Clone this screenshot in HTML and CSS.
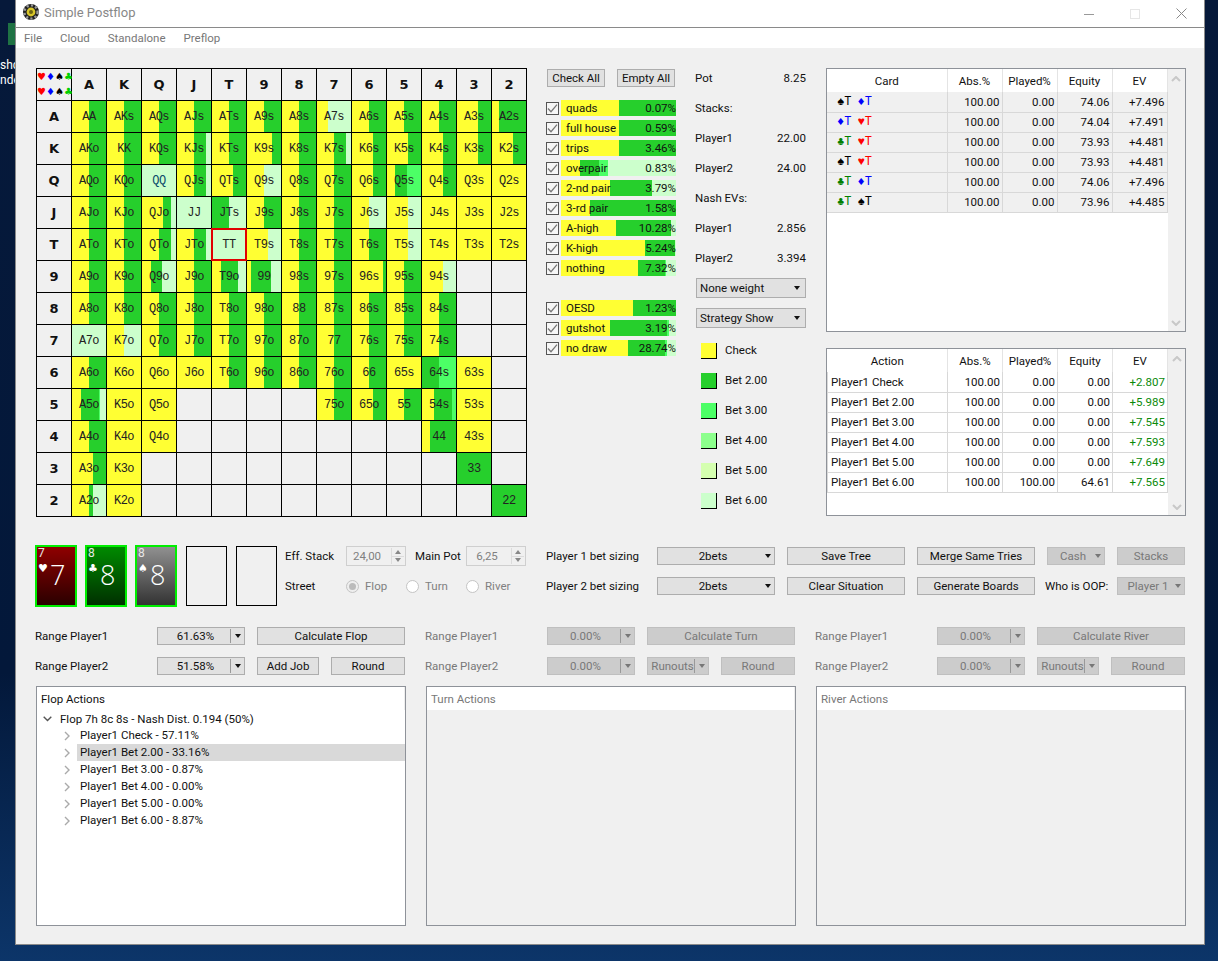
FILE: index.html
```html
<!DOCTYPE html>
<html lang="en">
<head>
    <meta charset="UTF-8">
    <meta name="viewport" content="width=device-width, initial-scale=1.0">
    <title>Simple Postflop</title>
    <link rel="stylesheet" href="styles.css">
</head>
<body>

<!-- bits of the desktop showing behind the window -->
<div class="desktop-icon">
    <div class="excel-icon"></div>
    <p>shc</p>
    <p>nde</p>
</div>

<div class="window">
    <div class="titlebar">
        <svg class="logo" width="16" height="16" viewBox="0 0 16 16">
            <circle cx="8" cy="8" r="8" fill="#222"/>
            <circle cx="8" cy="8" r="6.6" fill="none" stroke="#999" stroke-width="2.4" stroke-dasharray="2.2 2.2"/>
            <circle cx="8" cy="8" r="4.4" fill="#d8c62a"/>
            <circle cx="8" cy="8" r="2" fill="#6d6512"/>
        </svg>
        <span class="title">Simple Postflop</span>
        <div class="window-buttons">
            <div class="window-btn"><svg width="10" height="10" viewBox="0 0 10 10"><path d="M0 5.5h10" stroke="#999"/></svg></div>
            <div class="window-btn"><svg width="10" height="10" viewBox="0 0 10 10"><rect x=".5" y=".5" width="9" height="9" fill="none" stroke="#e6e6e6"/></svg></div>
            <div class="window-btn"><svg width="11" height="11" viewBox="0 0 11 11"><path d="M.5.5l10 10M10.5.5l-10 10" stroke="#888"/></svg></div>
        </div>
    </div>
    <div class="menubar">
        <span>File</span>
        <span>Cloud</span>
        <span>Standalone</span>
        <span>Preflop</span>
    </div>

    <div class="content">
        <div class="main-row">
            <!-- hand matrix -->
            <div class="matrix">
                <div class="corner">
                    <span class="heart">♥</span><span class="diamond">♦</span><span class="spade">♠</span><span class="club">♣</span>
                    <span class="heart">♥</span><span class="diamond">♦</span><span class="spade">♠</span><span class="club">♣</span>
                </div>
                <div class="head">A</div><div class="head">K</div><div class="head">Q</div><div class="head">J</div><div class="head">T</div><div class="head">9</div><div class="head">8</div><div class="head">7</div><div class="head">6</div><div class="head">5</div><div class="head">4</div><div class="head">3</div><div class="head">2</div>

                <div class="head">A</div>
                <div class="cell">AA</div><div class="cell">AKs</div><div class="cell">AQs</div><div class="cell">AJs</div><div class="cell">ATs</div><div class="cell">A9s</div><div class="cell">A8s</div>
                <div class="cell" style="--y:33%;--g:33%">A7s</div><div class="cell">A6s</div><div class="cell">A5s</div><div class="cell">A4s</div><div class="cell" style="--y:62%">A3s</div><div class="cell" style="--y:22%">A2s</div>

                <div class="head">K</div>
                <div class="cell">AKo</div><div class="cell">KK</div><div class="cell">KQs</div><div class="cell" style="--g:86%">KJs</div><div class="cell">KTs</div><div class="cell" style="--y:73%">K9s</div><div class="cell">K8s</div>
                <div class="cell" style="--g:85%">K7s</div><div class="cell" style="--y:62%">K6s</div><div class="cell" style="--y:62%">K5s</div><div class="cell" style="--y:62%">K4s</div><div class="cell" style="--y:62%">K3s</div><div class="cell" style="--y:62%">K2s</div>

                <div class="head">Q</div>
                <div class="cell">AQo</div><div class="cell">KQo</div><div class="cell pale blue">QQ</div><div class="cell" style="--g:86%">QJs</div><div class="cell" style="--y:62%">QTs</div><div class="cell" style="--g:50%">Q9s</div><div class="cell">Q8s</div>
                <div class="cell">Q7s</div><div class="cell" style="--y:62%">Q6s</div><div class="cell" style="--y:23%;--g:60%;--b:100%">Q5s</div><div class="cell" style="--y:62%">Q4s</div><div class="cell yellow">Q3s</div><div class="cell yellow">Q2s</div>

                <div class="head">J</div>
                <div class="cell">AJo</div><div class="cell">KJo</div><div class="cell" style="--y:62%;--g:85%">QJo</div><div class="cell pale">JJ</div><div class="cell" style="--y:0%;--g:50%">JTs</div><div class="cell">J9s</div><div class="cell">J8s</div>
                <div class="cell">J7s</div><div class="cell" style="--g:50%">J6s</div><div class="cell" style="--y:62%;--g:62%">J5s</div><div class="cell yellow">J4s</div><div class="cell yellow">J3s</div><div class="cell yellow">J2s</div>

                <div class="head">T</div>
                <div class="cell">ATo</div><div class="cell">KTo</div><div class="cell" style="--g:85%">QTo</div><div class="cell" style="--g:85%">JTo</div><div class="cell pale selected">TT</div><div class="cell" style="--y:62%;--g:62%">T9s</div><div class="cell">T8s</div>
                <div class="cell">T7s</div><div class="cell">T6s</div><div class="cell" style="--y:62%;--g:62%">T5s</div><div class="cell yellow">T4s</div><div class="cell yellow">T3s</div><div class="cell yellow">T2s</div>

                <div class="head">9</div>
                <div class="cell">A9o</div><div class="cell">K9o</div><div class="cell" style="--y:25%;--g:60%">Q9o</div><div class="cell">J9o</div><div class="cell" style="--y:25%;--g:75%">T9o</div><div class="cell" style="--y:12%;--g:70%">99</div><div class="cell">98s</div>
                <div class="cell">97s</div><div class="cell" style="--y:92%">96s</div><div class="cell">95s</div><div class="cell" style="--y:62%;--g:62%">94s</div><div class="cell empty"></div><div class="cell empty"></div>

                <div class="head">8</div>
                <div class="cell">A8o</div><div class="cell">K8o</div><div class="cell">Q8o</div><div class="cell">J8o</div><div class="cell">T8o</div><div class="cell">98o</div><div class="cell">88</div>
                <div class="cell">87s</div><div class="cell">86s</div><div class="cell">85s</div><div class="cell">84s</div><div class="cell empty"></div><div class="cell empty"></div>

                <div class="head">7</div>
                <div class="cell pale">A7o</div><div class="cell" style="--g:50%">K7o</div><div class="cell">Q7o</div><div class="cell">J7o</div><div class="cell">T7o</div><div class="cell">97o</div><div class="cell">87o</div>
                <div class="cell">77</div><div class="cell">76s</div><div class="cell">75s</div><div class="cell">74s</div><div class="cell empty"></div><div class="cell empty"></div>

                <div class="head">6</div>
                <div class="cell">A6o</div><div class="cell yellow">K6o</div><div class="cell yellow">Q6o</div><div class="cell yellow">J6o</div><div class="cell">T6o</div><div class="cell">96o</div><div class="cell">86o</div>
                <div class="cell">76o</div><div class="cell">66</div><div class="cell yellow">65s</div><div class="cell" style="--y:0%;--g:50%;--b:100%">64s</div><div class="cell yellow">63s</div><div class="cell empty"></div>

                <div class="head">5</div>
                <div class="cell" style="--y:27%;--g:80%;--b:82%">A5o</div><div class="cell yellow">K5o</div><div class="cell yellow">Q5o</div><div class="cell empty"></div><div class="cell empty"></div><div class="cell empty"></div><div class="cell empty"></div>
                <div class="cell">75o</div><div class="cell" style="--y:62%">65o</div><div class="cell">55</div><div class="cell" style="--y:35%;--g:88%;--b:100%">54s</div><div class="cell yellow">53s</div><div class="cell empty"></div>

                <div class="head">4</div>
                <div class="cell">A4o</div><div class="cell yellow">K4o</div><div class="cell yellow">Q4o</div><div class="cell empty"></div><div class="cell empty"></div><div class="cell empty"></div><div class="cell empty"></div>
                <div class="cell empty"></div><div class="cell empty"></div><div class="cell empty"></div><div class="cell" style="--y:24%">44</div><div class="cell yellow">43s</div><div class="cell empty"></div>

                <div class="head">3</div>
                <div class="cell" style="--y:62%">A3o</div><div class="cell yellow">K3o</div><div class="cell empty"></div><div class="cell empty"></div><div class="cell empty"></div><div class="cell empty"></div><div class="cell empty"></div>
                <div class="cell empty"></div><div class="cell empty"></div><div class="cell empty"></div><div class="cell empty"></div><div class="cell" style="--y:0%">33</div><div class="cell empty"></div>

                <div class="head">2</div>
                <div class="cell" style="--y:50%;--g:62%">A2o</div><div class="cell yellow">K2o</div><div class="cell empty"></div><div class="cell empty"></div><div class="cell empty"></div><div class="cell empty"></div><div class="cell empty"></div>
                <div class="cell empty"></div><div class="cell empty"></div><div class="cell empty"></div><div class="cell empty"></div><div class="cell empty"></div><div class="cell" style="--y:0%">22</div>
            </div>

            <!-- hand category filters -->
            <div class="filters">
                <div class="filter-buttons">
                    <button class="btn">Check All</button>
                    <button class="btn">Empty All</button>
                </div>
                <div class="filter-group">
                    <div class="filter"><span class="check"><svg width="11" height="11" viewBox="0 0 11 11"><path d="M1 5.5l3 3.2 6-7" fill="none" stroke="#777" stroke-width="1.3"/></svg></span><div class="bar" style="--y:50%"><span>quads</span><span>0.07%</span></div></div>
                    <div class="filter"><span class="check"><svg width="11" height="11" viewBox="0 0 11 11"><path d="M1 5.5l3 3.2 6-7" fill="none" stroke="#777" stroke-width="1.3"/></svg></span><div class="bar" style="--y:50%"><span>full house</span><span>0.59%</span></div></div>
                    <div class="filter"><span class="check"><svg width="11" height="11" viewBox="0 0 11 11"><path d="M1 5.5l3 3.2 6-7" fill="none" stroke="#777" stroke-width="1.3"/></svg></span><div class="bar" style="--y:50%"><span>trips</span><span>3.46%</span></div></div>
                    <div class="filter"><span class="check"><svg width="11" height="11" viewBox="0 0 11 11"><path d="M1 5.5l3 3.2 6-7" fill="none" stroke="#777" stroke-width="1.3"/></svg></span><div class="bar" style="--y:16.5%;--g:33%;--b:41%"><span>overpair</span><span>0.83%</span></div></div>
                    <div class="filter"><span class="check"><svg width="11" height="11" viewBox="0 0 11 11"><path d="M1 5.5l3 3.2 6-7" fill="none" stroke="#777" stroke-width="1.3"/></svg></span><div class="bar" style="--y:43%;--g:79%"><span>2-nd pair</span><span>3.79%</span></div></div>
                    <div class="filter"><span class="check"><svg width="11" height="11" viewBox="0 0 11 11"><path d="M1 5.5l3 3.2 6-7" fill="none" stroke="#777" stroke-width="1.3"/></svg></span><div class="bar" style="--y:25%"><span>3-rd pair</span><span>1.58%</span></div></div>
                    <div class="filter"><span class="check"><svg width="11" height="11" viewBox="0 0 11 11"><path d="M1 5.5l3 3.2 6-7" fill="none" stroke="#777" stroke-width="1.3"/></svg></span><div class="bar" style="--y:48%;--g:96%"><span>A-high</span><span>10.28%</span></div></div>
                    <div class="filter"><span class="check"><svg width="11" height="11" viewBox="0 0 11 11"><path d="M1 5.5l3 3.2 6-7" fill="none" stroke="#777" stroke-width="1.3"/></svg></span><div class="bar" style="--y:73%;--g:99%"><span>K-high</span><span>5.24%</span></div></div>
                    <div class="filter"><span class="check"><svg width="11" height="11" viewBox="0 0 11 11"><path d="M1 5.5l3 3.2 6-7" fill="none" stroke="#777" stroke-width="1.3"/></svg></span><div class="bar" style="--y:67%;--g:90%;--b:91%"><span>nothing</span><span>7.32%</span></div></div>
                </div>
                <div class="filter-group">
                    <div class="filter"><span class="check"><svg width="11" height="11" viewBox="0 0 11 11"><path d="M1 5.5l3 3.2 6-7" fill="none" stroke="#777" stroke-width="1.3"/></svg></span><div class="bar" style="--y:63%"><span>OESD</span><span>1.23%</span></div></div>
                    <div class="filter"><span class="check"><svg width="11" height="11" viewBox="0 0 11 11"><path d="M1 5.5l3 3.2 6-7" fill="none" stroke="#777" stroke-width="1.3"/></svg></span><div class="bar" style="--y:43%;--g:92%;--b:94%"><span>gutshot</span><span>3.19%</span></div></div>
                    <div class="filter"><span class="check"><svg width="11" height="11" viewBox="0 0 11 11"><path d="M1 5.5l3 3.2 6-7" fill="none" stroke="#777" stroke-width="1.3"/></svg></span><div class="bar" style="--y:58%;--g:90%;--b:92%"><span>no draw</span><span>28.74%</span></div></div>
                </div>
            </div>

            <!-- pot and stacks -->
            <div class="info">
                <div class="info-row"><span>Pot</span><span>8.25</span></div>
                <div class="info-row"><span>Stacks:</span></div>
                <div class="info-row"><span>Player1</span><span>22.00</span></div>
                <div class="info-row"><span>Player2</span><span>24.00</span></div>
                <div class="info-row"><span>Nash EVs:</span></div>
                <div class="info-row"><span>Player1</span><span>2.856</span></div>
                <div class="info-row"><span>Player2</span><span>3.394</span></div>
                <div class="combo info-combo"><span>None weight</span><i class="arrow"></i></div>
                <div class="combo info-combo"><span>Strategy Show</span><i class="arrow"></i></div>
                <div class="legend">
                    <div class="legend-row"><i class="swatch sw-check"></i>Check</div>
                    <div class="legend-row"><i class="swatch sw-bet2"></i>Bet 2.00</div>
                    <div class="legend-row"><i class="swatch sw-bet3"></i>Bet 3.00</div>
                    <div class="legend-row"><i class="swatch sw-bet4"></i>Bet 4.00</div>
                    <div class="legend-row"><i class="swatch sw-bet5"></i>Bet 5.00</div>
                    <div class="legend-row"><i class="swatch sw-bet6"></i>Bet 6.00</div>
                </div>
            </div>

            <!-- result tables -->
            <div class="tables">
                <div class="table-box cards-box">
                    <table class="grey-rows">
                        <thead>
                            <tr><th class="first">Card</th><th>Abs.%</th><th>Played%</th><th>Equity</th><th>EV</th></tr>
                        </thead>
                        <tbody>
                            <tr><td class="combo-cards"><b class="spade">♠T</b> <b class="diamond">♦T</b></td><td>100.00</td><td>0.00</td><td>74.06</td><td>+7.496</td></tr>
                            <tr><td class="combo-cards"><b class="diamond">♦T</b> <b class="heart">♥T</b></td><td>100.00</td><td>0.00</td><td>74.04</td><td>+7.491</td></tr>
                            <tr><td class="combo-cards"><b class="club">♣T</b> <b class="heart">♥T</b></td><td>100.00</td><td>0.00</td><td>73.93</td><td>+4.481</td></tr>
                            <tr><td class="combo-cards"><b class="spade">♠T</b> <b class="heart">♥T</b></td><td>100.00</td><td>0.00</td><td>73.93</td><td>+4.481</td></tr>
                            <tr><td class="combo-cards"><b class="club">♣T</b> <b class="diamond">♦T</b></td><td>100.00</td><td>0.00</td><td>74.06</td><td>+7.496</td></tr>
                            <tr><td class="combo-cards"><b class="club">♣T</b> <b class="spade">♠T</b></td><td>100.00</td><td>0.00</td><td>73.96</td><td>+4.485</td></tr>
                        </tbody>
                    </table>
                    <div class="scrollbar">
                        <svg width="10" height="6" viewBox="0 0 10 6"><path d="M1 5l4-4 4 4" fill="none" stroke="#c8c8c8" stroke-width="2"/></svg>
                        <svg width="10" height="6" viewBox="0 0 10 6"><path d="M1 1l4 4 4-4" fill="none" stroke="#c8c8c8" stroke-width="2"/></svg>
                    </div>
                </div>
                <div class="table-box actions-box">
                    <table class="green-ev">
                        <thead>
                            <tr><th class="first">Action</th><th>Abs.%</th><th>Played%</th><th>Equity</th><th>EV</th></tr>
                        </thead>
                        <tbody>
                            <tr><td class="action-name">Player1 Check</td><td>100.00</td><td>0.00</td><td>0.00</td><td>+2.807</td></tr>
                            <tr><td class="action-name">Player1 Bet 2.00</td><td>100.00</td><td>0.00</td><td>0.00</td><td>+5.989</td></tr>
                            <tr><td class="action-name">Player1 Bet 3.00</td><td>100.00</td><td>0.00</td><td>0.00</td><td>+7.545</td></tr>
                            <tr><td class="action-name">Player1 Bet 4.00</td><td>100.00</td><td>0.00</td><td>0.00</td><td>+7.593</td></tr>
                            <tr><td class="action-name">Player1 Bet 5.00</td><td>100.00</td><td>0.00</td><td>0.00</td><td>+7.649</td></tr>
                            <tr><td class="action-name">Player1 Bet 6.00</td><td>100.00</td><td>100.00</td><td>64.61</td><td>+7.565</td></tr>
                        </tbody>
                    </table>
                    <div class="scrollbar">
                        <svg width="10" height="6" viewBox="0 0 10 6"><path d="M1 5l4-4 4 4" fill="none" stroke="#c8c8c8" stroke-width="2"/></svg>
                        <svg width="10" height="6" viewBox="0 0 10 6"><path d="M1 1l4 4 4-4" fill="none" stroke="#c8c8c8" stroke-width="2"/></svg>
                    </div>
                </div>
            </div>
        </div>

        <!-- board cards and tree settings -->
        <div class="setup-row">
            <div class="board">
                <div class="card card-red"><span class="card-rank">7</span><div class="card-face"><span class="card-suit">♥</span><span class="card-big">7</span></div></div>
                <div class="card card-green"><span class="card-rank">8</span><div class="card-face"><span class="card-suit">♣</span><span class="card-big">8</span></div></div>
                <div class="card card-grey"><span class="card-rank">8</span><div class="card-face"><span class="card-suit">♠</span><span class="card-big">8</span></div></div>
                <div class="card card-empty"></div>
                <div class="card card-empty"></div>
            </div>
            <div class="street-form">
                <span>Eff. Stack</span>
                <div class="spin"><span>24,00</span><div class="spin-arrows"><i class="up"></i><i class="down"></i></div></div>
                <span class="pot-label">Main Pot</span>
                <div class="spin"><span>6,25</span><div class="spin-arrows"><i class="up"></i><i class="down"></i></div></div>
                <span>Street</span>
                <div class="radios">
                    <label class="radio on"><i></i>Flop</label>
                    <label class="radio"><i></i>Turn</label>
                    <label class="radio"><i></i>River</label>
                </div>
            </div>
            <div class="sizing">
                <span>Player 1 bet sizing</span>
                <div class="combo"><span class="grow">2bets</span><i class="arrow"></i></div>
                <button class="btn">Save Tree</button>
                <button class="btn">Merge Same Tries</button>
                <div class="combo off"><span class="grow">Cash</span><i class="arrow"></i></div>
                <button class="btn off">Stacks</button>
                <span>Player 2 bet sizing</span>
                <div class="combo"><span class="grow">2bets</span><i class="arrow"></i></div>
                <button class="btn">Clear Situation</button>
                <button class="btn">Generate Boards</button>
                <span class="oop-label">Who is OOP:</span>
                <div class="combo off"><span class="grow">Player 1</span><i class="arrow"></i></div>
            </div>
        </div>

        <!-- flop, turn, river -->
        <div class="streets">
            <div class="street">
                <div class="range-form">
                    <span class="range-label">Range Player1</span>
                    <div class="combo split"><span class="grow">61.63%</span><i class="divider"></i><i class="arrow"></i></div>
                    <button class="btn wide">Calculate Flop</button>
                    <span class="range-label">Range Player2</span>
                    <div class="combo split"><span class="grow">51.58%</span><i class="divider"></i><i class="arrow"></i></div>
                    <button class="btn">Add Job</button>
                    <button class="btn">Round</button>
                </div>
                <div class="tree">
                    <div class="tree-head">Flop Actions</div>
                    <div class="tree-row root"><svg width="9" height="6" viewBox="0 0 9 6"><path d="M.7.7l3.8 3.8L8.3.7" fill="none" stroke="#555" stroke-width="1.4"/></svg><span>Flop 7h 8c 8s - Nash Dist. 0.194 (50%)</span></div>
                    <div class="tree-row child"><svg width="7" height="10" viewBox="0 0 7 10"><path d="M1 1l4 4-4 4" fill="none" stroke="#aaa" stroke-width="1.4"/></svg><span>Player1 Check - 57.11%</span></div>
                    <div class="tree-row child picked"><svg width="7" height="10" viewBox="0 0 7 10"><path d="M1 1l4 4-4 4" fill="none" stroke="#aaa" stroke-width="1.4"/></svg><span>Player1 Bet 2.00 - 33.16%</span></div>
                    <div class="tree-row child"><svg width="7" height="10" viewBox="0 0 7 10"><path d="M1 1l4 4-4 4" fill="none" stroke="#aaa" stroke-width="1.4"/></svg><span>Player1 Bet 3.00 - 0.87%</span></div>
                    <div class="tree-row child"><svg width="7" height="10" viewBox="0 0 7 10"><path d="M1 1l4 4-4 4" fill="none" stroke="#aaa" stroke-width="1.4"/></svg><span>Player1 Bet 4.00 - 0.00%</span></div>
                    <div class="tree-row child"><svg width="7" height="10" viewBox="0 0 7 10"><path d="M1 1l4 4-4 4" fill="none" stroke="#aaa" stroke-width="1.4"/></svg><span>Player1 Bet 5.00 - 0.00%</span></div>
                    <div class="tree-row child"><svg width="7" height="10" viewBox="0 0 7 10"><path d="M1 1l4 4-4 4" fill="none" stroke="#aaa" stroke-width="1.4"/></svg><span>Player1 Bet 6.00 - 8.87%</span></div>
                </div>
            </div>

            <div class="street disabled">
                <div class="range-form">
                    <span class="range-label">Range Player1</span>
                    <div class="combo split off"><span class="grow">0.00%</span><i class="divider"></i><i class="arrow"></i></div>
                    <button class="btn off wide">Calculate Turn</button>
                    <span class="range-label">Range Player2</span>
                    <div class="combo split off"><span class="grow">0.00%</span><i class="divider"></i><i class="arrow"></i></div>
                    <div class="combo split off"><span class="grow">Runouts</span><i class="divider"></i><i class="arrow"></i></div>
                    <button class="btn off">Round</button>
                </div>
                <div class="tree">
                    <div class="tree-head">Turn Actions</div>
                </div>
            </div>

            <div class="street disabled">
                <div class="range-form">
                    <span class="range-label">Range Player1</span>
                    <div class="combo split off"><span class="grow">0.00%</span><i class="divider"></i><i class="arrow"></i></div>
                    <button class="btn off wide">Calculate River</button>
                    <span class="range-label">Range Player2</span>
                    <div class="combo split off"><span class="grow">0.00%</span><i class="divider"></i><i class="arrow"></i></div>
                    <div class="combo split off"><span class="grow">Runouts</span><i class="divider"></i><i class="arrow"></i></div>
                    <button class="btn off">Round</button>
                </div>
                <div class="tree">
                    <div class="tree-head">River Actions</div>
                </div>
            </div>
        </div>
    </div>
</div>

</body>
</html>
```

FILE: styles.css
```css
* {
    box-sizing: border-box;
}

html, body {
    height: 961px;
    margin: 0;
    overflow: hidden;
}

body {
    font-family: Roboto, "Noto Sans", sans-serif;
    font-size: 11.5px;
    color: #111;
    background: linear-gradient(180deg, #06193a 0%, #03183a 70%, #0c3569 100%);
}

/* Desktop behind the window */
.desktop-icon {
    position: absolute;
    left: 0;
    top: 23px;
    width: 15px;
    overflow: hidden;
    color: #fff;
    font-size: 12px;
}

.desktop-icon p {
    margin: 0;
    height: 15px;
    line-height: 15px;
}

.excel-icon {
    width: 7px;
    height: 22px;
    margin: 0 0 13px 8px;
    background: #1f7244;
}

.window {
    position: relative;
    width: 1190px;
    height: 945px;
    margin-left: 15px;
    background: #f0f0f0;
    border: 1px solid #8a8a8a;
    border-top: none;
}

/* Title bar and menu */
.titlebar {
    display: flex;
    align-items: center;
    height: 28px;
    padding-left: 7px;
    background: #fff;
    border-bottom: 1px solid #8a8a8a;
}

.logo {
    margin-bottom: 3px;
}

.title {
    margin: 0 0 3px 5px;
    font-size: 13px;
    color: #888;
}

.window-buttons {
    display: flex;
    margin-left: auto;
}

.window-btn {
    display: flex;
    justify-content: center;
    align-items: center;
    width: 46px;
    height: 22px;
}

.menubar {
    display: flex;
    gap: 18px;
    height: 20px;
    padding-left: 8px;
    align-items: center;
    background: #fff;
    color: #777;
}

.content {
    padding: 20px 0 0 20px;
}

.main-row {
    display: grid;
    grid-template-columns: 491px 130px 112px 360px;
    column-gap: 19px;
    height: 448px;
}

/* Hand matrix */
.matrix {
    display: grid;
    grid-template-columns: repeat(14, 34px);
    grid-auto-rows: 31px;
    gap: 1px;
    width: 491px;
    height: 449px;
    padding: 1px;
    background: #000;
}

.corner {
    display: grid;
    grid-template-columns: repeat(4, 1fr);
    align-items: center;
    justify-items: center;
    padding: 0 2px 0 0;
    background: #f0f0f0;
    font-family: "DejaVu Sans", sans-serif;
    font-size: 10px;
    line-height: 12px;
}

.heart { color: #f00; }
.diamond { color: #00f; }
.spade { color: #000; }
.club { color: #008000; }

.corner .club {
    color: #00d000;
}

.head {
    display: flex;
    justify-content: center;
    align-items: center;
    background: #f0f0f0;
    font-family: "DejaVu Sans", sans-serif;
    font-weight: bold;
    font-size: 13px;
}

.cell {
    --y: 50%;
    --g: 100%;
    --b: var(--g);
    display: flex;
    justify-content: center;
    align-items: center;
    font-family: "Liberation Mono", monospace;
    font-size: 12px;
    letter-spacing: -0.5px;
    color: #222;
    background: linear-gradient(90deg,
        #ffff33 var(--y),
        #26cf2c var(--y) var(--g),
        #4cff66 var(--g) var(--b),
        #ccffcc var(--b));
}

.cell.yellow { --y: 100%; }
.cell.pale { --y: 0%; --g: 0%; }
.cell.blue { color: #0a4a6a; }

.cell.empty {
    background: #f0f0f0;
}

.cell.selected {
    outline: 2px solid #e00000;
    outline-offset: -1px;
}

/* Filters */
.filters {
    padding-top: 1px;
}

.filter-buttons {
    display: flex;
    justify-content: space-between;
    padding: 0 1px;
    margin-bottom: 13px;
}

.btn {
    height: 18px;
    padding: 0;
    font: inherit;
    color: #111;
    background: #e1e1e1;
    border: 1px solid #adadad;
}

.btn.off {
    color: #787878;
    background: #cccccc;
    border-color: #bfbfbf;
}

.filter-buttons .btn {
    width: 58px;
}

.filter-group {
    display: flex;
    flex-direction: column;
    gap: 4px;
    margin-bottom: 24px;
}

.filter {
    display: flex;
    align-items: center;
    height: 16px;
}

.check {
    display: flex;
    justify-content: center;
    align-items: center;
    flex: none;
    width: 13px;
    height: 13px;
    margin-right: 2px;
    background: #f6f6f6;
    border: 1px solid #555;
}

.bar {
    --y: 50%;
    --g: 100%;
    --b: var(--g);
    display: flex;
    justify-content: space-between;
    align-items: center;
    flex: 1;
    height: 16px;
    padding-left: 5px;
    background: linear-gradient(90deg,
        #ffff33 var(--y),
        #26cf2c var(--y) var(--g),
        #4cff66 var(--g) var(--b),
        #ccffcc var(--b));
}

/* Pot, stacks, legend */
.info {
    padding-right: 1px;
}

.info-row {
    display: flex;
    justify-content: space-between;
    align-items: center;
    height: 20px;
    margin-bottom: 10px;
}

.combo {
    display: flex;
    align-items: center;
    height: 18px;
    padding: 0 5px 0 3px;
    background: #e1e1e1;
    border: 1px solid #adadad;
}

.combo .grow {
    flex: 1;
    text-align: center;
}

.combo.off {
    color: #787878;
    background: #cccccc;
    border-color: #bfbfbf;
}

.info-combo {
    justify-content: space-between;
    height: 20px;
    margin: 0 0 10px 1px;
    width: 110px;
}

.arrow {
    flex: none;
    width: 0;
    height: 0;
    border-left: 3.5px solid transparent;
    border-right: 3.5px solid transparent;
    border-top: 4px solid #111;
}

.off .arrow {
    border-top-color: #777;
}

.divider {
    flex: none;
    width: 1px;
    height: 14px;
    margin: 0 4px 0 0;
    background: #999;
}

.split {
    padding-right: 3px;
}

.legend {
    display: flex;
    flex-direction: column;
    gap: 10px;
    margin-top: 12px;
}

.legend-row {
    display: flex;
    align-items: center;
    height: 20px;
    padding-left: 6px;
}

.swatch {
    width: 16px;
    height: 16px;
    margin: 2px 8px 0 0;
    border-right: 1px solid #000;
    border-bottom: 1px solid #000;
}

.sw-check { background: #ffff33; }
.sw-bet2 { background: #26cf2c; }
.sw-bet3 { background: #4cff66; }
.sw-bet4 { background: #8cff8c; }
.sw-bet5 { background: #d5ffb0; }
.sw-bet6 { background: #ccffcc; }

/* Result tables */
.tables {
    display: flex;
    flex-direction: column;
    gap: 16px;
}

.table-box {
    display: flex;
    align-items: flex-start;
    background: #fff;
    border: 1px solid #8e9299;
}

.cards-box { height: 264px; }
.actions-box { height: 168px; }

.table-box table {
    width: 340px;
    table-layout: fixed;
    border-collapse: collapse;
}

.table-box th {
    height: 23px;
    padding: 0;
    width: 55px;
    font-weight: normal;
    background: #fff;
    border-right: 1px solid #e4e4e4;
}

.table-box th.first {
    width: 120px;
}

.table-box td {
    height: 20px;
    padding: 0 2px 0 0;
    text-align: right;
    border-right: 1px solid #d8d8d8;
    border-bottom: 1px solid #d8d8d8;
}

.grey-rows td {
    background: #f0f0f0;
}

.green-ev td:last-child {
    color: #0a8a0a;
}

.table-box td.action-name {
    padding-left: 3px;
    text-align: left;
    border-left: 1px solid #d8d8d8;
}

.table-box td.combo-cards {
    padding-left: 10px;
    text-align: left;
    font-family: "Liberation Mono", monospace;
    font-size: 12px;
    word-spacing: -1px;
}

.combo-cards b {
    font-weight: normal;
}

.scrollbar {
    display: flex;
    flex-direction: column;
    justify-content: space-between;
    align-items: center;
    width: 18px;
    height: 100%;
    padding: 7px 0 5px;
    background: #f0f0f0;
}

/* Board and settings */
.setup-row {
    display: flex;
    margin: 29px 0 0 -1px;
    height: 62px;
}

.board {
    display: flex;
    gap: 8px;
    margin-right: 8px;
}

.card {
    display: flex;
    flex-direction: column;
    width: 42px;
    height: 62px;
    padding-left: 1px;
    color: #e8e8e8;
    border: 2px solid #00ee00;
}

.card-red { background: linear-gradient(180deg, #8f0000, #2a0000); }
.card-green { background: linear-gradient(180deg, #008a00, #003000); }
.card-grey { background: linear-gradient(180deg, #909090, #333333); }

.card-empty {
    width: 41px;
    height: 60px;
    margin: 1px 0 1px 1px;
    border: 1px solid #000;
}

.card-rank {
    font-size: 12px;
    line-height: 13px;
}

.card-face {
    display: flex;
    align-items: flex-start;
    margin-top: 2px;
}

.card-suit {
    margin-top: 1px;
    font-family: "DejaVu Sans", sans-serif;
    font-size: 11px;
    line-height: 12px;
    color: #fff;
}

.card-big {
    margin-left: 2px;
    font-family: "Open Sans", sans-serif;
    font-weight: 300;
    font-size: 27px;
    line-height: 26px;
    color: #fff;
}

.street-form {
    display: grid;
    grid-template-columns: 61px 60px 60px 60px;
    grid-template-rows: 20px 20px;
    row-gap: 10px;
    align-items: center;
    margin-top: 1px;
}

.pot-label {
    padding-left: 9px;
}

.spin {
    display: flex;
    align-items: center;
    justify-content: center;
    position: relative;
    height: 20px;
    padding-right: 18px;
    color: #808080;
    border: 1px solid #cfcfcf;
}

.spin-arrows {
    position: absolute;
    right: 1px;
    top: 1px;
    bottom: 1px;
    display: flex;
    flex-direction: column;
    width: 13px;
    border-left: 1px solid #dcdcdc;
}

.spin-arrows i {
    flex: 1;
    display: flex;
    justify-content: center;
    align-items: center;
}

.spin-arrows .up {
    border-bottom: 1px solid #dcdcdc;
}

.spin-arrows i::before {
    content: "";
    border-left: 3px solid transparent;
    border-right: 3px solid transparent;
}

.spin-arrows .up::before { border-bottom: 4px solid #888; }
.spin-arrows .down::before { border-top: 4px solid #888; }

.radios {
    grid-column: 2 / 5;
    display: flex;
}

.radio {
    display: flex;
    align-items: center;
    width: 65px;
    color: #808080;
}

.radio i {
    display: flex;
    justify-content: center;
    align-items: center;
    width: 13px;
    height: 13px;
    margin-right: 6px;
    background: #fff;
    border: 1px solid #c4c4c4;
    border-radius: 50%;
}

.radio.on i {
    background: #eee;
}

.radio.on i::before {
    content: "";
    width: 7px;
    height: 7px;
    border-radius: 50%;
    background: #bbb;
}

.sizing {
    display: grid;
    grid-template-columns: 99px 118px 118px 118px 58px 68px;
    grid-template-rows: 18px 18px;
    column-gap: 12px;
    row-gap: 12px;
    align-items: center;
    margin: 2px 0 0 20px;
}

.sizing .combo {
    padding-right: 3px;
}

.oop-label {
    margin-left: -2px;
    white-space: nowrap;
}

/* Street panels */
.streets {
    display: grid;
    grid-template-columns: repeat(3, 370px);
    column-gap: 20px;
    margin-top: 20px;
}

.street {
    display: flex;
    flex-direction: column;
    gap: 11px;
}

.range-form {
    display: grid;
    grid-template-columns: 109px 88px 62px 74px;
    grid-auto-rows: 18px;
    column-gap: 12px;
    row-gap: 12px;
    align-items: center;
}

.range-label {
    margin-left: -1px;
}

.btn.wide {
    grid-column: 3 / 5;
}

.disabled .range-label {
    color: #787878;
}

.disabled .tree {
    background: #f0f0f0;
    color: #787878;
}

.tree {
    height: 240px;
    background: #fff;
    border: 1px solid #8e9299;
}

.tree-head {
    height: 23px;
    padding-left: 4px;
    line-height: 24px;
    background: #fff;
    border-right: 1px solid #eeeeee;
}

.tree-row {
    display: flex;
    align-items: center;
    height: 17px;
}

.tree-row.root {
    padding-left: 6px;
}

.tree-row.root span {
    margin-left: 8px;
}

.tree-row.child {
    padding-left: 27px;
}

.tree-row.child span {
    flex: 1;
    margin-left: 6px;
    padding-left: 3px;
    line-height: 17px;
}

.tree-row.picked span {
    background: #d9d9d9;
}
```
